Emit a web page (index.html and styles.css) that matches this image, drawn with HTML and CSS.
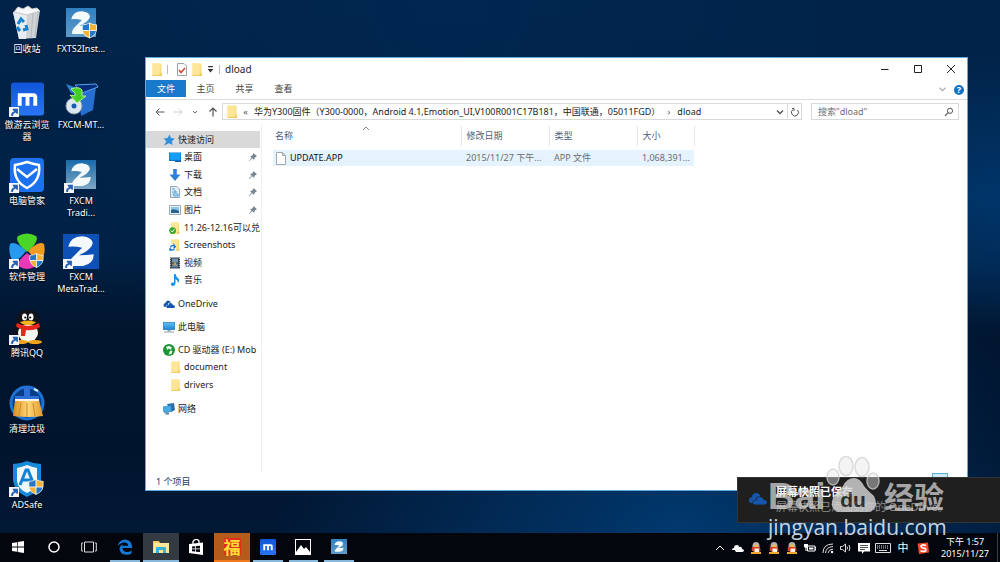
FILE: index.html
```html
<!DOCTYPE html>
<html lang="zh-CN">
<head>
<meta charset="utf-8">
<title>dload</title>
<link rel="stylesheet" href="styles.css">
</head>
<body>
<svg class="defs" aria-hidden="true">
  <defs>
    <linearGradient id="gz" x1="0" y1="0" x2="0" y2="1"><stop offset="0" stop-color="#2f7fc0"/><stop offset="1" stop-color="#5f9cc8"/></linearGradient>
    <linearGradient id="gz2" x1="0" y1="0" x2="0" y2="1"><stop offset="0" stop-color="#1769aa"/><stop offset="1" stop-color="#7fa9c4"/></linearGradient>
    <linearGradient id="gm" x1="0" y1="0" x2="0" y2="1"><stop offset="0" stop-color="#0f55d8"/><stop offset="1" stop-color="#2a74f6"/></linearGradient>
    <linearGradient id="gf" x1="0" y1="0" x2="1" y2="1"><stop offset="0" stop-color="#ffe9a2"/><stop offset="1" stop-color="#f6d56f"/></linearGradient>
    <linearGradient id="gb" x1="0" y1="0" x2="1" y2="0"><stop offset="0" stop-color="#d98e1c"/><stop offset=".5" stop-color="#ffd77a"/><stop offset="1" stop-color="#e19a28"/></linearGradient>
    <linearGradient id="gs" x1="0" y1="0" x2="0" y2="1"><stop offset="0" stop-color="#5cc0f5"/><stop offset="1" stop-color="#2388d6"/></linearGradient>
  </defs>
  <symbol id="shortcut" viewBox="0 0 9 9"><rect width="9" height="9" fill="#f4f6fa"/><path d="M2 8Q1.600 4.500 4.600 4L3.300 2.500 3.500 1.500H8V6L7.300 6.200 5.900 5Q3.500 5.800 3.500 8z" fill="#2461b4"/></symbol>
  <symbol id="shield" viewBox="0 0 15 16"><path d="M7.500 0Q10 2 15 2V7Q14.500 13 7.500 16 .5 13 0 7V2Q5 2 7.500 0z" fill="#f2f2ee"/><path d="M7 1V7.500H.8V2.700Q4.500 2.700 7 1z" fill="#2476c9"/><path d="M8 1V7.500H14.200V2.700Q10.500 2.700 8 1z" fill="#f5b336"/><path d="M1 8.500H7V15Q2 12.500 1 8.500z" fill="#f5b336"/><path d="M14 8.500H8V15Q13 12.500 14 8.500z" fill="#2476c9"/></symbol>
  <symbol id="zed" viewBox="0 0 32 32"><path d="M4 12Q6 2 17 2 27 3 27 9 26 13 20 17L14 20Q22 20 28 19 28 28 18 30H5Q4 27 7 23L17 13Q10 11 4 12z" fill="#f4f9fb"/></symbol>
  <symbol id="folder" viewBox="0 0 10 13"><path d="M.5.5H9.500V10.500H10V12.800H.5z" fill="url(#gf)"/><path d="M.5.5H8V12.800H.5z" fill="#ffe597"/><path d="M7.500 10.500H10V12.800H7.500zM.5 12H10V12.900H.5z" fill="#efcb62"/></symbol>
  <symbol id="qq" viewBox="0 0 32 34"><path d="M16 0Q27 0 27 12 30 17 31 23 30 27 27 24 27 29 23 32H9Q5 29 5 24 2 27 1 23 2 17 5 12 5 0 16 0z" fill="#111318"/><ellipse cx="16" cy="23" rx="10" ry="9" fill="#f5f5f2"/><ellipse cx="12.500" cy="7" rx="2.500" ry="3.400" fill="#fff"/><ellipse cx="19" cy="7" rx="2.500" ry="3.400" fill="#fff"/><circle cx="13.300" cy="7.500" r="1.100"/><circle cx="18.200" cy="7.500" r="1.100"/><path d="M8 12Q16 9 24 12 22 15 16 15T8 12z" fill="#f6b419"/><path d="M5 13Q16 19 27 13L28 17Q22 21 14 20L13 26H9V19Q5 18 4 16z" fill="#e4281d"/><ellipse cx="9" cy="32" rx="7" ry="2" fill="#f5a51a"/><ellipse cx="23" cy="32" rx="7" ry="2" fill="#f5a51a"/></symbol>
  <symbol id="qqtray" viewBox="0 0 10 12"><path d="M5 0Q8.500 0 8.500 4L9 9H1L1.500 4Q1.500 0 5 0z" fill="#b8aeb0"/><path d="M3 3Q5 2 7 3L6 5H4z" fill="#f3bd3a"/><path d="M1 5H9L9.600 9 8 10H3L.6 8z" fill="#dc3d26"/><path d="M3.500 6.500H8V10H3.500z" fill="#fff1e8"/><path d="M0 10H10V12H0z" fill="#f4a62c"/></symbol>
  <symbol id="max" viewBox="0 0 34 34"><rect width="34" height="34" rx="3" fill="url(#gm)"/><path d="M7 24V11H23Q27 11 27 15V24H23V15H19V24H15V15H11V24z" fill="#fff"/></symbol>
  <symbol id="pin" viewBox="0 0 8 8"><path d="M4.500 0L8 3.300 7 3.700 5.500 5 5.200 7 3.200 5.200.3 7.900 0 7.600 2.600 4.700 1 3 3 2.700 4.300 1z" fill="#76858f"/></symbol>
  <symbol id="cloud" viewBox="0 0 20 13"><path d="M2 11Q-1 7 4 5 5 0 10 1 13 2 13 4 8 4 8 8 4 8 5 11.500z" fill="#1556ae"/><path d="M7 13Q4 12 6 9 7 8 9 8.500 9 5 12.500 5 15.500 5 16.500 8 20 8 20 11 19.500 13 17 13z" fill="#1556ae"/></symbol>
</svg>

<main class="desktop">
  <ul class="shortcuts">
    <li><button class="launcher"><svg class="pic" viewBox="0 0 36 36"><path d="M4 7L31 5 27 33 10 34z" fill="#cfd2d5"/><path d="M4 7L18 9 17 34 10 34z" fill="#e9ecee"/><path d="M5 7L9 2 14 4 19 1 23 4 28 3 31 6 18 10z" fill="#f7f7f7" stroke="#c5c9cd"/><path d="M24 8L22 33M29 7L26 32" stroke="#b7babd"/><g fill="none" stroke="#1682d4" stroke-width="3"><path d="M9 19L12 14 15 17M17 20L18 24 14 25M11 26L8 22"/></g></svg><span>回收站</span></button></li>
    <li><button class="launcher"><svg class="pic" viewBox="0 0 36 36"><rect x="3" y="3" width="30" height="29" fill="url(#gz)"/><use href="#zed" x="5" y="4" width="26" height="27"/><use href="#shield" x="19" y="17" width="15" height="17"/></svg><span>FXTS2Inst...</span></button></li>
    <li><button class="launcher"><svg class="pic" viewBox="0 0 36 36"><use href="#max" x="2" y="1" width="33" height="34"/><use href="#shortcut" y="26" width="10" height="10"/></svg><span>傲游云浏览器</span></button></li>
    <li><button class="launcher"><svg class="pic" viewBox="0 0 36 36"><path d="M8 6L20 10V34L11 29z" fill="#0d43a6"/><path d="M18 11L33 6 30 29 18 35z" fill="#246fd0"/><path d="M3 3L14 7 17 11 8 12z" fill="#2a83d0"/><path d="M12 4L33 3 35 6 19 12z" fill="#072b78" stroke="#5aa3e8"/><circle cx="11" cy="25" r="8" fill="#dce7ef" stroke="#8b9ba6"/><circle cx="11" cy="25" r="2.500" fill="#1b5aaf"/><path d="M8 8Q16 5 19 9V15H23L14 22 7 14 12 15V12z" fill="#43cf23" stroke="#b6f08b"/></svg><span>FXCM-MT...</span></button></li>
    <li><button class="launcher"><svg class="pic" viewBox="0 0 36 36"><rect x="1" y="1" width="34" height="34" rx="4" fill="#1b71ee"/><path d="M18 5Q24 7 30 8 32 24 18 31 4 24 6 8 12 7 18 5zM8 12L18 20 28 12" fill="none" stroke="#fff" stroke-width="2.500"/><use href="#shortcut" y="26" width="10" height="10"/></svg><span>电脑管家</span></button></li>
    <li><button class="launcher"><svg class="pic" viewBox="0 0 36 36"><rect x="3" y="3" width="30" height="29" fill="url(#gz2)"/><use href="#zed" x="5" y="4" width="26" height="27"/><use href="#shortcut" x="1" y="26" width="10" height="10"/></svg><span>FXCM Tradi...</span></button></li>
    <li><button class="launcher"><svg class="pic" viewBox="0 0 36 36"><path d="M18 19Q5 8 9 3 18-2 27 3 31 8 18 19z" fill="#49d626"/><path d="M17 18Q6 7 1 11-1 19 3 27 9 29 17 18z" fill="#2799ef"/><path d="M19 18Q30 7 35 11 37 20 33 26 27 28 19 18z" fill="#f29a24"/><path d="M18 20Q5 31 11 34 18 38 25 34 29 29 18 20z" fill="#ec38b6"/><use href="#shield" x="20" y="20" width="15" height="15"/><use href="#shortcut" y="26" width="10" height="10"/></svg><span>软件管理</span></button></li>
    <li><button class="launcher"><svg class="pic" viewBox="0 0 36 36"><rect y="1" width="36" height="35" fill="#0c50b8"/><use href="#zed" x="1" y="1" width="34" height="34"/><use href="#shortcut" y="26" width="10" height="10"/></svg><span>FXCM MetaTrad...</span></button></li>
    <li><button class="launcher"><svg class="pic" viewBox="0 0 36 36"><use href="#qq" x="3" y="1" width="32" height="34"/><use href="#shortcut" y="26" width="10" height="10"/></svg><span>腾讯QQ</span></button></li>
    <li></li>
    <li><button class="launcher"><svg class="pic" viewBox="0 0 36 36"><circle cx="18" cy="18" r="16" fill="#0b3d86" stroke="#1c73d4" stroke-width="3"/><path d="M15 2H21V11H30V15H6V11H15z" fill="#2c6fd6"/><path d="M25 4L29 6" stroke="#d7edff" stroke-width="2"/><path d="M6 15H30L34 31Q20 33 4 31z" fill="url(#gb)"/><path d="M6 14H30V16H6z" fill="#f7f3e9"/><path d="M12 18L10 31M18 18V32M24 18L26 31" stroke="#c98a2b"/></svg><span>清理垃圾</span></button></li>
    <li></li>
    <li><button class="launcher"><svg class="pic" viewBox="0 0 36 36"><path d="M18 0Q25 3 32 3V20Q30 31 18 36 6 31 4 20V3Q11 3 18 0z" fill="#1689d8"/><path d="M18 4Q23 6 28 7V20Q27 28 18 32 9 28 8 20V7Q13 6 18 4z" fill="#f1f8fc"/><path d="M11 24L17 9H19L25 24M13 19H22" fill="none" stroke="#1282d4" stroke-width="3"/><use href="#shield" x="19" y="18" width="16" height="16"/><use href="#shortcut" y="26" width="10" height="10"/></svg><span>ADSafe</span></button></li>
  </ul>

  <section class="window">
    <header class="titlebar">
      <svg class="i-folder" viewBox="0 0 10 13"><use href="#folder"/></svg>
      <i class="sep"></i>
      <button class="plain" aria-label="属性"><svg class="i-check" viewBox="0 0 10 13"><path d="M.5.5H7L9.500 3V12.500H.5z" fill="#fff" stroke="#9ba0a5"/><path d="M2 7L4 9.500 8 5" fill="none" stroke="#d8412f" stroke-width="1.500"/></svg></button>
      <button class="plain" aria-label="新建文件夹"><svg class="i-folder" viewBox="0 0 10 13"><use href="#folder"/></svg></button>
      <button class="plain" aria-label="自定义"><svg class="i-drop" viewBox="0 0 6 6"><path d="M1 0H5V1H1zM.5 2.500H5.500L3 5.500z" fill="#333"/></svg></button>
      <i class="sep"></i>
      <h1 class="title">dload</h1>
      <div class="controls">
        <button class="plain" aria-label="最小化"><svg viewBox="0 0 10 10"><path d="M1 5.500H8.500" stroke="#222"/></svg></button>
        <button class="plain" aria-label="最大化"><svg viewBox="0 0 10 10"><path d="M1.500 1.500H8.500V8.500H1.500z" fill="none" stroke="#222"/></svg></button>
        <button class="plain" aria-label="关闭"><svg viewBox="0 0 10 10"><path d="M1 1L9 9M9 1L1 9" stroke="#222"/></svg></button>
      </div>
    </header>
    <nav class="tabs">
      <button class="tab active">文件</button><button class="tab">主页</button><button class="tab">共享</button><button class="tab">查看</button>
      <div class="ribbon-end">
        <button class="plain" aria-label="展开功能区"><svg class="i-drop" viewBox="0 0 6 6"><path d="M.5 1.500L3 4 5.500 1.500" fill="none" stroke="#aaa"/></svg></button>
        <button class="help" aria-label="帮助">?</button>
      </div>
    </nav>
    <div class="addressbar">
      <div class="history">
        <button class="plain" aria-label="后退"><svg viewBox="0 0 10 10"><path d="M9.500 5H1M4.500 1.500L1 5 4.500 8.500" fill="none" stroke="#555"/></svg></button>
        <button class="plain" aria-label="前进"><svg viewBox="0 0 10 10"><path d="M.5 5H9M5.500 1.500L9 5 5.500 8.500" fill="none" stroke="#ccc"/></svg></button>
        <button class="plain slim" aria-label="最近位置"><svg viewBox="0 0 10 10"><path d="M3 4L5 6 7 4" fill="none" stroke="#666"/></svg></button>
        <button class="plain" aria-label="上移"><svg viewBox="0 0 10 10"><path d="M5 9.500V1M1.500 4.500L5 1 8.500 4.500" fill="none" stroke="#555" stroke-width="1.200"/></svg></button>
      </div>
      <div class="path">
        <svg class="i-folder" viewBox="0 0 10 13"><use href="#folder"/></svg>
        <span class="chev">«</span>
        <button class="crumb">华为Y300固件（Y300-0000，Android 4.1,Emotion_UI,V100R001C17B181，中国联通，05011FGD）</button>
        <span class="chev">›</span>
        <button class="crumb">dload</button>
        <div class="path-end">
          <button class="plain" aria-label="历史记录"><svg viewBox="0 0 10 10"><path d="M2 3.500L5 6.500 8 3.500" fill="none" stroke="#555" stroke-width="1.400"/></svg></button>
          <button class="plain refresh" aria-label="刷新"><svg viewBox="0 0 10 10"><path d="M3 2.500A3.500 3.500 0 1 0 7.500 3M2 1.500H4V4" fill="none" stroke="#555"/></svg></button>
        </div>
      </div>
      <label class="search"><input type="text" placeholder='搜索"dload"' aria-label="搜索"><svg viewBox="0 0 10 10"><circle cx="6" cy="3.800" r="2.600" fill="none" stroke="#555"/><path d="M4 5.600L1 8.800" stroke="#555" stroke-width="1.200"/></svg></label>
    </div>
    <div class="body">
      <nav class="tree">
        <ul class="group quick">
          <li><a class="node root selected" href="#"><svg viewBox="0 0 12 12"><path d="M6.500.5L8 4 11.700 4.500 9 7.200 9.500 11 6 9.200 1 11.500 3.400 7.200.5 4.500 4.700 4z" fill="#2e8fdf"/></svg><span>快速访问</span></a></li>
          <li><a class="node" href="#"><svg viewBox="0 0 12 12"><path d="M0 1.500H12V10H0z" fill="#0d76cf"/><path d="M.6 2H11.400V8.800H.6z" fill="#12a0f5"/><path d="M6 10H12V11H6z" fill="#0d5aa0"/></svg><span>桌面</span></a><svg class="pin"><use href="#pin"/></svg></li>
          <li><a class="node" href="#"><svg viewBox="0 0 12 12"><path d="M4.200 0H7.800V5.500H11.500L6 12 .5 5.500H4.200z" fill="#2d82d4"/></svg><span>下载</span></a><svg class="pin"><use href="#pin"/></svg></li>
          <li><a class="node" href="#"><svg viewBox="0 0 12 12"><path d="M1.500.5H8L10.500 3V11.500H1.500z" fill="#e4eef5" stroke="#8fa6b5"/><path d="M3 3H6M3 6H8M6 4V7M4 8H9V10H5z" stroke="#4c9fd6" fill="none"/></svg><span>文档</span></a><svg class="pin"><use href="#pin"/></svg></li>
          <li><a class="node" href="#"><svg viewBox="0 0 12 12"><path d="M.5 1.500H11.500V10.500H.5z" fill="#e9f3f8" stroke="#9aa9b3"/><path d="M2 3H10V9H2z" fill="#8cc7ea"/><path d="M2 6Q5 4 10 7V9H2z" fill="#2c628c"/></svg><span>图片</span></a><svg class="pin"><use href="#pin"/></svg></li>
          <li><a class="node" href="#"><svg viewBox="0 0 12 12"><use href="#folder" x="1.500" width="9" height="12"/><circle cx="3.600" cy="8.600" r="3.400" fill="#37a82c"/><path d="M2 8.600L3.300 10 5.400 7.200" stroke="#fff" fill="none"/></svg><span>11.26-12.16可以兑</span></a></li>
          <li><a class="node" href="#"><svg viewBox="0 0 12 12"><use href="#folder" x="1.500" width="9" height="12"/><path d="M0 5.500H7V12H0z" fill="#eef6fc"/><path d="M1.500 8.500Q2 6 5 7V5.800L6.500 7.800 4.500 9M5.500 9.500Q4 12 2 10.500L1 11.500V9" fill="none" stroke="#1873c9" stroke-width="1.200"/></svg><span>Screenshots</span></a></li>
          <li><a class="node" href="#"><svg viewBox="0 0 12 12"><path d="M1 .5H11V11.500H1z" fill="#3b4149"/><path d="M3 1.500H9V5.500H3z" fill="#7193b4"/><path d="M3 6.500H9V10.500H3z" fill="#5a7fa8"/><path d="M1.500 1V11.500M10.500 1V11.500" stroke="#a9adb2" stroke-dasharray="1 1"/><path d="M4 8L6 4 8 9" fill="#c79b4a"/></svg><span>视频</span></a></li>
          <li><a class="node" href="#"><svg viewBox="0 0 12 12"><path d="M5 0H6.500Q7 3 10 5 10.500 7 9 9 9 6 6.500 5V9.500Q6 12 3.500 12 1.500 11.500 2 9.500 3 8 5 8.500z" fill="#1692e8"/></svg><span>音乐</span></a></li>
        </ul>
        <ul class="group"><li><a class="node root" href="#"><svg viewBox="0 0 20 13"><use href="#cloud"/></svg><span>OneDrive</span></a></li></ul>
        <ul class="group"><li><a class="node root" href="#"><svg viewBox="0 0 12 12"><path d="M0 1H12V9H0z" fill="#3b88bd"/><path d="M.7 1.700H11.300V8.200H.7z" fill="url(#gs)"/><path d="M4.500 9H7.500V10.300H4.500zM1 10.500H11V11.500H1z" fill="#8fa3b0"/></svg><span>此电脑</span></a></li></ul>
        <ul class="group drive">
          <li><a class="node root" href="#"><svg viewBox="0 0 12 12"><circle cx="6" cy="6" r="6" fill="#1d9437"/><path d="M3 3L6 1.800 9 3.500 7.500 6 6 4.500 4.500 6zM7 7L9.500 6.500 8.500 10 5.500 10.500z" fill="#e9f9ea"/></svg><span>CD 驱动器 (E:) Mob</span></a></li>
          <li><a class="node" href="#"><svg viewBox="0 0 12 12"><use href="#folder" x="1.500" width="10" height="12"/></svg><span>document</span></a></li>
          <li><a class="node" href="#"><svg viewBox="0 0 12 12"><use href="#folder" x="1.500" width="10" height="12"/></svg><span>drivers</span></a></li>
        </ul>
        <ul class="group"><li><a class="node root" href="#"><svg viewBox="0 0 12 12"><path d="M4 1L11 0 12 7 8 9z" fill="#2a6ca8"/><path d="M0 4L8 2.500 8.500 8.500 1 9.500z" fill="#48aee8" stroke="#2f7db5" stroke-width=".7"/><path d="M3 9.500H6V11.500H2z" fill="#56829f"/></svg><span>网络</span></a></li></ul>
      </nav>
      <div class="files">
        <table>
          <colgroup><col class="c-name"><col class="c-date"><col class="c-type"><col class="c-size"></colgroup>
          <thead><tr><th>名称<svg class="sort" viewBox="0 0 8 5"><path d="M1 4L4 1 7 4" fill="none" stroke="#8a8a8a"/></svg></th><th>修改日期</th><th>类型</th><th>大小</th></tr></thead>
          <tbody>
            <tr class="space"><td colspan="4"></td></tr>
            <tr class="file"><td><span class="fname"><svg viewBox="0 0 10 13"><path d="M.5.5H6.500L9.500 3.500V12.500H.5zM6.500.5V3.500H9.500" fill="#fff" stroke="#a3a7aa"/></svg>UPDATE.APP</span></td><td>2015/11/27 下午...</td><td>APP 文件</td><td class="num">1,068,391...</td></tr>
          </tbody>
        </table>
      </div>
    </div>
    <footer class="status"><span>1 个项目</span><button class="view" aria-label="缩略图"></button></footer>
  </section>

  <aside class="toast">
    <svg viewBox="0 0 20 13"><use href="#cloud"/></svg>
    <div><strong>屏幕快照已保存</strong><p>屏幕快照已添加到你的 OneDrive。</p></div>
  </aside>

  <div class="watermark">
    <div class="brand"><span>Bai</span><svg class="paw" viewBox="0 0 58 58"><g fill="#e8e8e8" fill-opacity=".55" stroke="#d2d2d2" stroke-width="1.500"><ellipse cx="22" cy="11" rx="7" ry="9.500"/><ellipse cx="38" cy="12" rx="7" ry="9.500"/><ellipse cx="9" cy="22" rx="6" ry="8"/><ellipse cx="49" cy="26" rx="6" ry="8"/></g><path d="M30 23Q36 23 40 31 44 36 50 41 56 54 45 57H14Q5 54 9 43 14 37 19 31 23 23 30 23z" fill="#d8d8d8"/><text x="29" y="52" text-anchor="middle" class="du">du</text></svg><span class="cn">经验</span></div>
    <div class="site">jingyan.baidu.com</div>
  </div>
</main>

<footer class="taskbar">
  <div class="apps">
    <button aria-label="开始"><svg viewBox="0 0 16 16"><path d="M2 4L7 3.200V7.600H2zM7.700 3.100L14 2V7.600H7.700zM2 8.400H7V12.800L2 12zM7.700 8.400H14V14L7.700 12.900z" fill="#fff"/></svg></button>
    <button aria-label="Cortana"><svg viewBox="0 0 16 16"><circle cx="8" cy="8" r="5" fill="none" stroke="#fff" stroke-width="1.500"/></svg></button>
    <button aria-label="任务视图"><svg viewBox="0 0 16 16"><path d="M3.500 3H12.500V13H3.500zM2 4H.7V12H2M14 4H15.300V12H14" fill="none" stroke="#ddd"/></svg></button>
    <button class="open" aria-label="Edge"><svg viewBox="0 0 16 16"><path d="M.8 7Q2 .5 8.500.5 15 1 15.300 9H5.500Q6 13 10 13 12.500 13 14.500 11.500V14.500Q12 16 9 15.800 3 15.500 2.500 10 3 6 6.500 4.500 5 5.500 5 6.800H11Q11 3.500 7.500 3.500 3.500 3.500.8 7z" fill="#1478d4"/></svg></button>
    <button class="open current" aria-label="文件资源管理器"><svg viewBox="0 0 16 16"><path d="M0 2H6L7 4H15V14H0z" fill="#f0cb68"/><path d="M1 4H16V14H0z" fill="#ffe79a"/><path d="M3 14V9Q3 8 4 8H12Q13 8 13 9V14H10V11H6V14z" fill="#34b4dc"/></svg></button>
    <button aria-label="应用商店"><svg viewBox="0 0 16 16"><path d="M1 5L15 3.500V16L1 14z" fill="#fff"/><path d="M5 5V2.500Q8-1.500 11 2V4" fill="none" stroke="#fff" stroke-width="1.300"/><path d="M4 7.500L7.300 7.200V9.500H4zM8 7.100L12 6.700V9.500H8zM4 10.300H7.300V12.500L4 12.200zM8 10.300H12V13.100L8 12.700z" fill="#05080f"/></svg></button>
    <button class="open fu" aria-label="福"><span>福</span></button>
    <button class="open" aria-label="傲游"><svg viewBox="0 0 16 16"><use href="#max"/></svg></button>
    <button class="open" aria-label="照片"><svg viewBox="0 0 16 16"><rect x=".5" y=".5" width="15" height="15" fill="#05080f" stroke="#fff"/><path d="M1 13L6 6 9 10 11 8 15 13V15H1z" fill="#fff"/></svg></button>
    <button class="open" aria-label="FXCM"><svg viewBox="0 0 16 16"><rect width="16" height="15" fill="url(#gz)"/><use href="#zed" x="2" y="1" width="12" height="13"/></svg></button>
  </div>
  <div class="tray">
    <button aria-label="显示隐藏的图标"><svg viewBox="0 0 12 12"><path d="M2 8L6 4 10 8" fill="none" stroke="#fff"/></svg></button>
    <button aria-label="OneDrive"><svg viewBox="0 0 12 12"><path d="M0 8Q0 6 2 6 2 3 5 3 7 3 7 5 10 4 10 7 12 7 12 9 11 10 10 10H4Q3 9 3 8z" fill="#fff"/></svg></button>
    <button aria-label="QQ"><svg viewBox="0 0 10 12"><use href="#qqtray"/></svg></button>
    <button aria-label="QQ"><svg viewBox="0 0 10 12"><use href="#qqtray"/></svg></button>
    <button aria-label="QQ"><svg viewBox="0 0 10 12"><use href="#qqtray"/></svg></button>
    <button aria-label="电池"><svg viewBox="0 0 12 12"><path d="M3.500 4H11V9H3.500zM11 5.500H12V7.500H11" fill="none" stroke="#fff"/><path d="M5 5.500H9.500V7.500H5zM0 2H4V5L2.500 6V9H1.500V6L0 5z" fill="#fff"/></svg></button>
    <button aria-label="网络"><svg viewBox="0 0 12 12"><g fill="none" stroke="#ddd"><path d="M1 11Q1 2 11 2M3.500 11Q4 5 11 4.500M6 11Q6.500 7.500 11 7"/></g><circle cx="10" cy="10" r="1.200" fill="#fff"/></svg></button>
    <button aria-label="音量"><svg viewBox="0 0 12 12"><path d="M.5 4.500H2.500L5.500 2V10L2.500 7.500H.5zM7 4.500Q8 6 7 7.500M9 3Q10.800 6 9 9" fill="none" stroke="#ddd"/></svg></button>
    <button aria-label="操作中心"><svg viewBox="0 0 12 12"><path d="M0 1H12V9.500H6L4 12V9.500H0z" fill="#fff"/><path d="M2 3.500H10M2 5.500H10M2 7.500H7" stroke="#222" stroke-width=".8"/></svg></button>
    <button class="wide" aria-label="触摸键盘"><svg class="keys" viewBox="0 0 16 10"><path d="M.5.5H15.500V9.500H.5z" fill="none" stroke="#ddd"/><path d="M2 3H14M2 5H14" stroke="#ddd" stroke-dasharray="1 1"/><path d="M4 7.500H12" stroke="#ddd"/></svg></button>
    <button class="wide" aria-label="输入法">中</button>
    <button class="wide" aria-label="搜狗输入法"><svg viewBox="0 0 12 12"><path d="M.5 1.500L11 .5 12 10.500 2 12z" fill="#ee4b22"/><path d="M9 3.500Q4 2 4 4.500 4.500 6 7.500 6.300 9.500 7 8.500 9 6.500 10 3.500 8.800" fill="none" stroke="#fff" stroke-width="1.700"/></svg></button>
    <button class="clock"><time>下午 1:57</time><time>2015/11/27</time></button>
  </div>
</footer>
</body>
</html>
```

FILE: styles.css
```css
* { box-sizing: border-box; }
body {
  margin: 0;
  height: 100vh;
  display: flex;
  flex-direction: column;
  overflow: hidden;
  font: 9px/12px "Noto Sans", "Noto Sans CJK SC", sans-serif;
  color: #222;
  background:
    radial-gradient(ellipse at 68% 95%, rgba(0, 74, 142, .65), transparent 42%),
    radial-gradient(ellipse at 102% 35%, rgba(0, 62, 122, .7), transparent 28%),
    radial-gradient(ellipse at 45% 0%, rgba(0, 42, 86, .6), transparent 55%),
    linear-gradient(180deg, #012349 0%, #012145 45%, #01152f 58%, #01142e 80%, #021a38 100%);
}
button { font: inherit; color: inherit; background: none; border: 0; padding: 0; }
ul { list-style: none; margin: 0; padding: 0; }
a { color: inherit; text-decoration: none; }
.defs { position: absolute; width: 0; height: 0; }
.desktop { flex: 1; position: relative; min-height: 0; }

.shortcuts {
  display: grid;
  grid-template-columns: 54px 54px;
  grid-auto-rows: 76px;
  padding-top: 5px;
  width: 108px;
}
.shortcuts li { display: flex; justify-content: center; }
.launcher {
  width: 52px;
  display: flex;
  flex-direction: column;
  align-items: center;
  gap: 2px;
  color: #fff;
  text-shadow: 0 1px 2px #000;
}
.pic { width: 36px; height: 36px; flex: none; }

.window {
  position: absolute;
  inset: 57px 32px 42px 145px;
  display: flex;
  flex-direction: column;
  background: #fff;
  border: 1px solid #5fa9dc;
}
.titlebar { display: flex; align-items: center; gap: 5px; height: 22px; padding-left: 6px; }
.plain { display: flex; align-items: center; justify-content: center; }
.i-folder, .i-check { width: 10px; height: 13px; flex: none; }
.titlebar .i-check { margin-left: 4px; }
.i-drop { width: 7px; height: 7px; }
.sep { width: 1px; height: 9px; background: #bbb; }
.title { margin: 0; font-size: 10px; font-weight: 400; }
.controls { display: flex; margin-left: auto; }
.controls .plain { width: 33px; height: 20px; }
.controls svg { width: 10px; height: 10px; }
.tabs { display: flex; align-items: center; height: 20px; border-bottom: 1px solid #dadbdc; }
.tab { width: 39px; height: 17px; align-self: flex-start; color: #444; }
.tab.active { width: 40px; background: #1979ca; color: #fff; }
.ribbon-end { display: flex; gap: 8px; margin-left: auto; padding-right: 3px; }
.help { width: 10px; height: 10px; border-radius: 50%; background: #1173c8; color: #fff; line-height: 10px; font-weight: 700; }

.addressbar { display: flex; align-items: center; height: 23px; padding-right: 8px; }
.history { width: 76px; display: flex; justify-content: space-between; padding: 0 4px 0 9px; }
.history svg, .path-end svg { width: 10px; height: 10px; }
.path { flex: 1; min-width: 0; height: 17px; display: flex; align-items: center; border: 1px solid #d9d9d9; padding-left: 4px; white-space: nowrap; }
.chev { width: 17px; text-align: center; color: #555; flex: none; }
.path-end { display: flex; margin-left: auto; align-self: stretch; }
.path-end .plain { width: 14px; }
.path-end .refresh { border-left: 1px solid #d9d9d9; }
.search { display: flex; align-items: center; width: 148px; height: 17px; margin-left: 9px; border: 1px solid #d9d9d9; padding: 0 4px 0 6px; }
.search input { flex: 1; min-width: 0; border: 0; padding: 0; font: inherit; outline: 0; }
.search input::placeholder { color: #6d6d6d; opacity: 1; }
.search svg { width: 10px; height: 10px; }

.body { flex: 1; min-height: 0; display: flex; }
.tree { width: 116px; padding: 8px 1px 0 0; border-right: 1px solid #f0f0f0; overflow: hidden; }
.group { display: grid; grid-auto-rows: 1fr; height: 17px; margin-bottom: 6px; }
.group.quick { height: 158px; }
.group.drive { height: 53px; }
.group li { display: flex; align-items: center; position: relative; min-width: 0; }
.node { flex: 1; min-width: 0; height: 17px; display: flex; align-items: center; gap: 3px; padding-left: 23px; white-space: nowrap; overflow: hidden; }
.node.root { padding-left: 17px; }
.node svg { width: 12px; height: 12px; flex: none; }
.selected { background: #d9d9d9; }
.pin { position: absolute; right: 3px; width: 8px; height: 8px; }

.files { flex: 1; padding: 3px 12px 0 11px; }
table { border-collapse: collapse; table-layout: fixed; width: 421px; }
.c-name { width: 188px; }
.c-date, .c-type { width: 88px; }
.c-size { width: 57px; }
th { position: relative; height: 20px; padding: 0 0 0 5px; text-align: left; font-weight: 400; color: #4c607a; border-right: 1px solid #e8e8e8; }
th:first-child { padding-left: 2px; }
.sort { position: absolute; top: 0; left: 89px; width: 8px; height: 5px; }
.space td { height: 4px; padding: 0; }
.file { background: #e5f3ff; }
.file td { height: 16px; padding: 0 0 0 5px; white-space: nowrap; color: #6d6d6d; }
.file td.num { text-align: right; padding: 0 4px 0 0; }
.file td:first-child { padding-left: 3px; color: #111; }
.fname { display: flex; align-items: center; gap: 4px; }
.fname svg { width: 10px; height: 13px; }
.status { display: flex; justify-content: space-between; align-items: center; height: 17px; padding: 0 19px 0 10px; color: #1e395b; }
.view { width: 16px; height: 17px; background: #cfe9f7; border: 1px solid #56add8; }

.toast {
  position: absolute;
  right: 0;
  bottom: 10px;
  width: 263px;
  height: 46px;
  display: flex;
  gap: 9px;
  padding: 6px 11px 6px 10px;
  background: #1f1f1f;
  border: 1px solid #343434;
  border-right: 0;
  font-size: 11px;
  line-height: 15px;
  color: #8b8b8b;
  white-space: nowrap;
}
.toast svg { width: 19px; height: 13px; margin-top: 8px; }
.toast strong { color: #fff; }
.toast p { margin: 0; }

.watermark { position: absolute; right: 56px; bottom: -8px; width: 176px; color: rgba(225, 225, 225, .7); }
.brand { display: flex; align-items: flex-end; justify-content: space-between; font: 700 37px/32px "Liberation Sans", sans-serif; }
.paw { width: 58px; height: 58px; flex: none; margin: 0 -2px 0 -5px; opacity: .8; }
.du { font: 700 21px "Liberation Sans", sans-serif; fill: #303030; }
.cn { font: 700 30px/36px "Noto Sans CJK SC", sans-serif; }
.site { font: 21px/28px "Open Sans", "Noto Sans", sans-serif; color: rgba(225, 236, 246, .9); }

.taskbar { display: flex; justify-content: space-between; height: 29px; background: #03060d; color: #fff; }
.apps { display: grid; grid-template-columns: repeat(10, 1fr); width: 357px; }
.apps button { display: flex; align-items: center; justify-content: center; border-bottom: 2px solid transparent; }
.apps svg { width: 16px; height: 16px; }
.apps .open { border-bottom-color: #86b9dc; margin: 0 3px; }
.apps .current { margin: 0; background: #343a41; }
.apps .fu { margin: 0; background: #b65c1b; border-bottom-color: #f17a1a; color: #ffdc37; font: 700 17px/17px "Noto Sans CJK SC", sans-serif; }
.fu span { background: #e12d1e; }
.tray { display: flex; align-items: center; padding-right: 2px; }
.tray button { width: 18px; display: flex; justify-content: center; align-items: center; font-size: 11px; }
.tray svg { width: 12px; height: 12px; }
.tray .wide { width: 20px; }
.tray .keys { width: 16px; }
.tray .clock { width: 65px; height: 29px; flex-direction: column; font-size: 9px; border-right: 1px solid #3a3f46; }
```
